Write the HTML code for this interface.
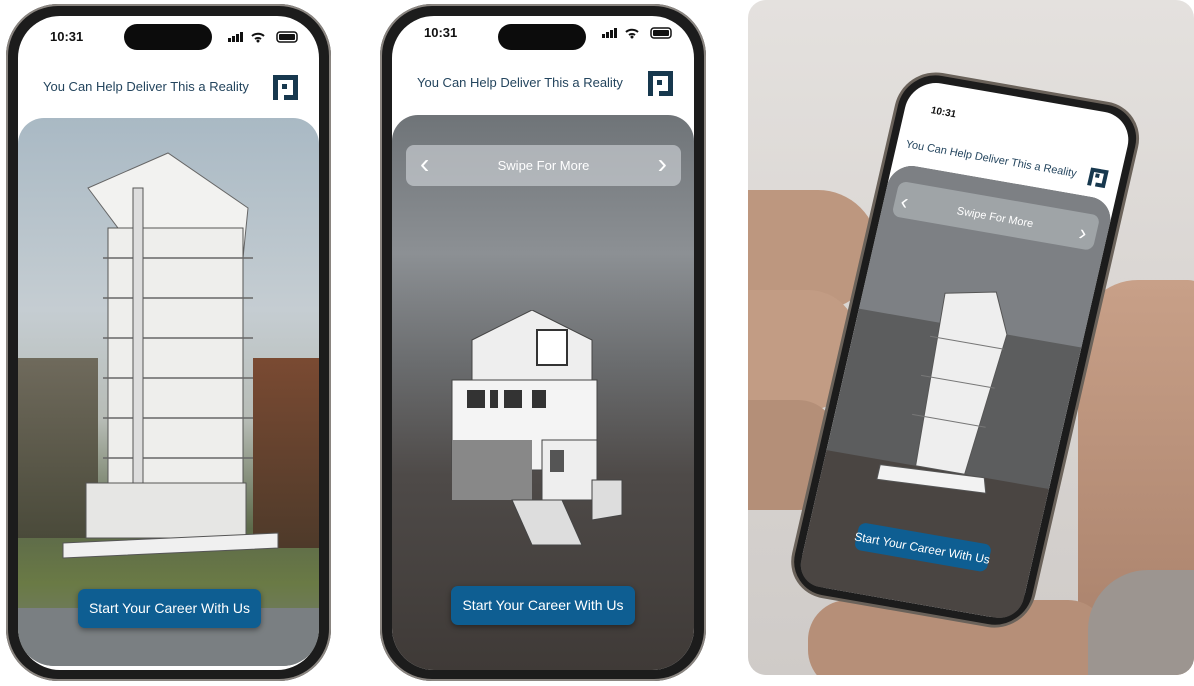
<!DOCTYPE html>
<html><head><meta charset="utf-8"><style>
*{margin:0;padding:0;box-sizing:border-box}
body{width:1194px;height:686px;background:#fff;position:relative;overflow:hidden;font-family:"Liberation Sans",sans-serif}
.abs{position:absolute}
.frame{position:absolute;border-radius:52px;background:#1c1c1c;box-shadow:0 0 0 2px #8a8580 inset}
.screen{position:absolute;border-radius:42px;background:#fff;overflow:hidden}
.time{position:absolute;font-size:13px;font-weight:bold;color:#111}
.island{position:absolute;width:88px;height:26px;border-radius:13px;background:#0c0c0c}
.title{position:absolute;font-size:13px;color:#24455e}
.btn{position:absolute;background:#0e5e92;color:#fff;font-size:14px;border-radius:7px;text-align:center;line-height:39px;box-shadow:0 2px 6px rgba(0,0,0,.4)}
</style></head><body>

<!-- Phone 1 -->
<div class="frame" style="left:6px;top:4px;width:325px;height:677px"></div>
<div class="screen" style="left:18px;top:16px;width:301px;height:654px">
  <div class="time" style="left:32px;top:13px">10:31</div>
  <div class="island" style="left:106px;top:8px"></div>
  <svg class="abs" style="left:210px;top:14px" width="80" height="14"><rect x="0" y="8" width="3" height="4" fill="#111"/><rect x="4" y="6" width="3" height="6" fill="#111"/><rect x="8" y="4" width="3" height="8" fill="#111"/><rect x="12" y="2" width="3" height="10" fill="#111"/><path d="M24 6a9 9 0 0 1 12 0M27 9a5 5 0 0 1 6 0" stroke="#111" stroke-width="2" fill="none"/><circle cx="30" cy="11" r="1.5" fill="#111"/><rect x="49" y="2" width="20" height="10" rx="3" stroke="#111" stroke-width="1.5" fill="none"/><rect x="51" y="4" width="16" height="6" rx="1" fill="#111"/></svg>
  <div class="title" style="left:25px;top:63px">You Can Help Deliver This a Reality</div>
  <svg class="abs" style="left:255px;top:59px" width="25" height="25"><path d="M0 0h14v5H5v20H0z M9 9h5v5H9z M11 0h14v25H11v-5h9V5h-9z" fill="#17384e"/></svg>
  <div class="abs" style="left:0;top:102px;width:301px;height:548px;border-radius:26px 26px 36px 36px;overflow:hidden;background:linear-gradient(#a9b9c4 0%,#c5cdd2 35%,#b7bcb6 55%,#5d6a4a 75%,#6a7a45 85%,#757a7c 100%)">
    <div class="abs" style="left:0;top:240px;width:80px;height:180px;background:linear-gradient(#6f6a5c,#4a4a3a)"></div>
    <div class="abs" style="left:235px;top:240px;width:66px;height:190px;background:linear-gradient(#7a4a32,#4e3a2a)"></div>
    <div class="abs" style="left:0;top:490px;width:301px;height:60px;background:#7a7f82"></div>
    <svg class="abs" style="left:40px;top:30px" width="230" height="420"><polygon points="30,40 110,5 190,60 185,110 60,80" fill="#f2f2f0" stroke="#666"/><rect x="50" y="80" width="135" height="255" fill="#eeeeec" stroke="#555"/><g stroke="#666" stroke-width="1.5"><line x1="45" y1="110" x2="195" y2="110"/><line x1="45" y1="150" x2="195" y2="150"/><line x1="45" y1="190" x2="195" y2="190"/><line x1="45" y1="230" x2="195" y2="230"/><line x1="45" y1="270" x2="195" y2="270"/><line x1="45" y1="310" x2="195" y2="310"/></g><rect x="75" y="40" width="10" height="300" fill="#ddd" stroke="#555"/><rect x="28" y="335" width="160" height="55" fill="#e6e6e4" stroke="#555"/><polygon points="5,395 220,385 220,400 5,410" fill="#f0f0f0" stroke="#555"/></svg>
    <div class="btn" style="left:60px;top:471px;width:183px">Start Your Career With Us</div>
  </div>
</div>

<!-- Phone 2 -->
<div class="frame" style="left:380px;top:4px;width:326px;height:677px"></div>
<div class="screen" style="left:392px;top:16px;width:302px;height:654px">
  <div class="time" style="left:32px;top:9px">10:31</div>
  <div class="island" style="left:106px;top:8px"></div>
  <svg class="abs" style="left:210px;top:10px" width="80" height="14"><rect x="0" y="8" width="3" height="4" fill="#111"/><rect x="4" y="6" width="3" height="6" fill="#111"/><rect x="8" y="4" width="3" height="8" fill="#111"/><rect x="12" y="2" width="3" height="10" fill="#111"/><path d="M24 6a9 9 0 0 1 12 0M27 9a5 5 0 0 1 6 0" stroke="#111" stroke-width="2" fill="none"/><circle cx="30" cy="11" r="1.5" fill="#111"/><rect x="49" y="2" width="20" height="10" rx="3" stroke="#111" stroke-width="1.5" fill="none"/><rect x="51" y="4" width="16" height="6" rx="1" fill="#111"/></svg>
  <div class="title" style="left:25px;top:59px">You Can Help Deliver This a Reality</div>
  <svg class="abs" style="left:256px;top:55px" width="25" height="25"><path d="M0 0h14v5H5v20H0z M9 9h5v5H9z M11 0h14v25H11v-5h9V5h-9z" fill="#17384e"/></svg>
  <div class="abs" style="left:0;top:99px;width:302px;height:555px;border-radius:26px 26px 36px 36px;overflow:hidden;background:linear-gradient(#6f7478 0%,#8c9094 25%,#6a6c6e 45%,#4e4a48 65%,#3f3a37 100%)">
    <div class="abs" style="left:14px;top:30px;width:275px;height:41px;border-radius:8px;background:rgba(200,204,208,.7);color:#fff;font-size:13px;text-align:center;line-height:41px">Swipe For More<span class="abs" style="left:14px;top:-2px;font-size:28px">‹</span><span class="abs" style="right:14px;top:-2px;font-size:28px">›</span></div>
    <svg class="abs" style="left:50px;top:195px" width="190" height="240"><polygon points="30,30 90,0 150,30 150,90 30,90" fill="#eee" stroke="#444"/><rect x="95" y="20" width="30" height="35" fill="#fff" stroke="#333" stroke-width="2"/><rect x="10" y="70" width="145" height="90" fill="#f4f4f4" stroke="#444"/><g fill="#333"><rect x="25" y="80" width="18" height="18"/><rect x="48" y="80" width="8" height="18"/><rect x="62" y="80" width="18" height="18"/><rect x="90" y="80" width="14" height="18"/></g><rect x="10" y="130" width="80" height="60" fill="#888"/><rect x="100" y="130" width="55" height="60" fill="#eee" stroke="#444"/><rect x="108" y="140" width="14" height="22" fill="#555"/><polygon points="70,190 120,190 140,235 90,235" fill="#ddd" stroke="#444"/><polygon points="150,170 180,170 180,205 150,210" fill="#ddd" stroke="#444"/></svg>
    <div class="btn" style="left:59px;top:471px;width:184px">Start Your Career With Us</div>
  </div>
</div>

<!-- Right photo -->
<div class="abs" style="left:748px;top:0;width:446px;height:675px;border-radius:18px;overflow:hidden;background:linear-gradient(180deg,#e4e1de 0%,#dbd7d4 40%,#cfcbc8 100%)">
  <div class="abs" style="left:0;top:190px;width:130px;height:120px;border-radius:0 60px 60px 0;background:#bd977f"></div>
  <div class="abs" style="left:0;top:290px;width:110px;height:120px;border-radius:0 50px 50px 0;background:#c29c84"></div>
  <div class="abs" style="left:0;top:400px;width:90px;height:110px;border-radius:0 40px 40px 0;background:#b48f78"></div>
  <div class="abs" style="left:330px;top:280px;width:130px;height:420px;border-radius:60px 20px 0 0;background:linear-gradient(#c8a088,#a67e68)"></div>
  <div class="abs" style="left:60px;top:600px;width:300px;height:90px;border-radius:40px;background:#b68f78"></div>
  <div class="abs" style="left:340px;top:570px;width:130px;height:120px;border-radius:60px 0 0 0;background:#9c9590"></div>
  <svg class="abs" style="left:0;top:0" width="446" height="675">
    <g transform="matrix(0.98 0.171 -0.224 0.976 157 68)">
      <rect x="0" y="0" width="245" height="535" rx="38" fill="#1c1c1c" stroke="#6a625a" stroke-width="3"/>
      <rect x="9" y="9" width="227" height="517" rx="30" fill="#fff"/>
      <clipPath id="c"><rect x="9" y="95" width="227" height="431" rx="24"/></clipPath>
      <g clip-path="url(#c)">
        <rect x="9" y="95" width="227" height="431" fill="#5c5d5e"/>
        <rect x="9" y="95" width="227" height="150" fill="#7d8084"/>
        <rect x="9" y="390" width="227" height="136" fill="#4a4542"/>
      </g>
      <text x="35" y="40" font-size="10" font-weight="bold" fill="#111" font-family="Liberation Sans">10:31</text>
      <text x="18" y="78" font-size="11" fill="#24455e" font-family="Liberation Sans">You Can Help Deliver This a Reality</text>
      <path d="M205 66h10v4h-6v14h-4z M211 71h4v4h-4z M213 66h10v18h-10v-4h6V70h-6z" fill="#17384e"/>
      <rect x="20" y="112" width="205" height="36" rx="8" fill="#a8acb0" opacity=".8"/>
      <text x="122" y="135" font-size="11" fill="#fff" text-anchor="middle" font-family="Liberation Sans">Swipe For More</text>
      <text x="26" y="139" font-size="22" fill="#fff">‹</text><text x="208" y="139" font-size="22" fill="#fff">›</text>
      <polygon points="90,215 140,205 160,245 150,390 100,390" fill="#eee" stroke="#555"/>
      <g stroke="#777"><line x1="85" y1="260" x2="160" y2="260"/><line x1="85" y1="300" x2="160" y2="300"/><line x1="85" y1="340" x2="160" y2="340"/></g>
      <polygon points="65,395 170,390 175,405 65,410" fill="#f2f2f2" stroke="#555"/>
      <rect x="58" y="455" width="135" height="28" rx="7" fill="#0e5e92"/>
      <text x="125" y="474" font-size="12" fill="#fff" text-anchor="middle" font-family="Liberation Sans">Start Your Career With Us</text>
    </g>
  </svg>
</div>
</body></html>
